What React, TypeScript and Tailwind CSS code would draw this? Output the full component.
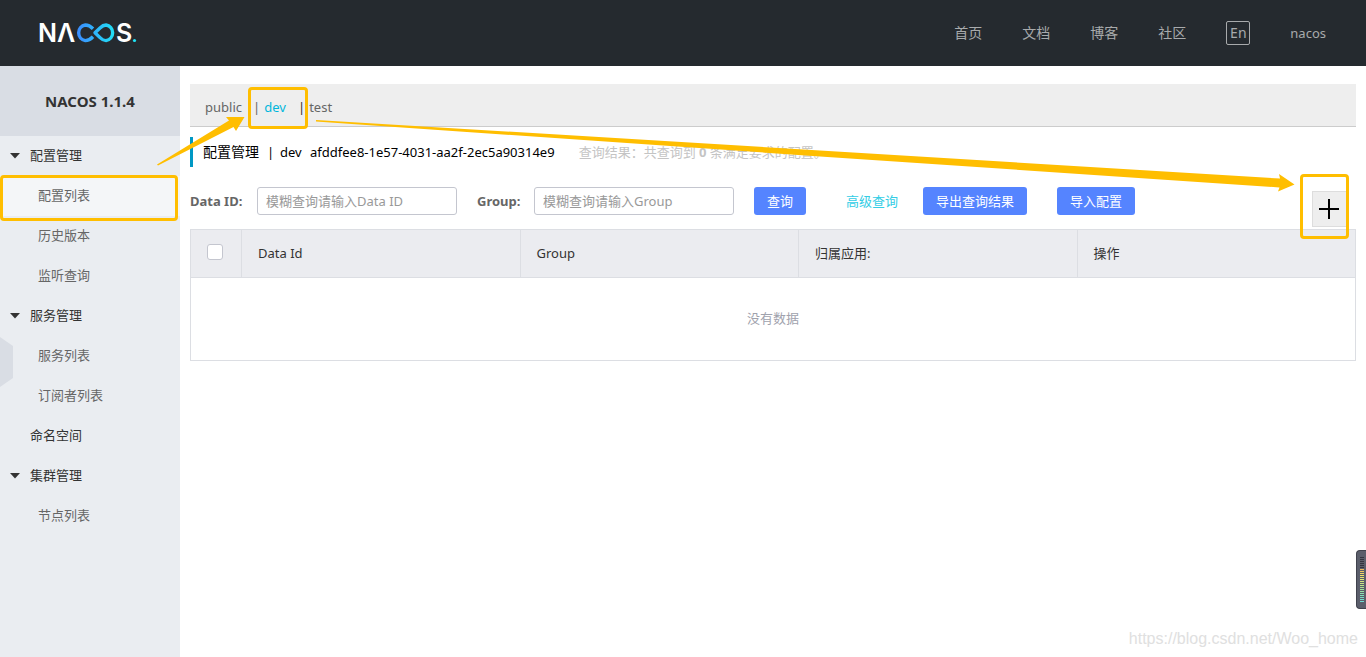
import type { ReactNode } from "react";

const NAV_LINKS = ["首页", "文档", "博客", "社区"];

const MENU = [
  { title: "配置管理", open: true, children: ["配置列表", "历史版本", "监听查询"] },
  { title: "服务管理", open: true, children: ["服务列表", "订阅者列表"] },
  { title: "命名空间", open: false, children: [] },
  { title: "集群管理", open: true, children: ["节点列表"] },
];

const COLUMNS = ["Data Id", "Group", "归属应用:", "操作"];

const METER_COLORS = [
  "#33343f", "#33343f", "#33343f", "#33343f", "#33343f", "#33343f",
  "#f0b95c", "#f0c860", "#efd566", "#ecdf6c", "#e6e472", "#dfe678",
  "#d3e57e", "#c7e484", "#bbe48b", "#aee392", "#a2e29b", "#96e1a5",
  "#8be0b0", "#81dfba", "#79dec4", "#74ddcc", "#70dcd2",
];

const Logo = () => (
  <svg width="108" height="40" viewBox="-4 -7 108 40" role="img" aria-label="NACOS">
    <defs>
      <linearGradient id="loop" x1="37" y1="0" x2="76" y2="0" gradientUnits="userSpaceOnUse">
        <stop offset="0" stopColor="#3c8cff" />
        <stop offset="1" stopColor="#1fe3f5" />
      </linearGradient>
    </defs>
    <g fill="#fff" fontFamily="Inter, sans-serif" fontSize="25" fontWeight="600">
      <text x="-2" y="22">N</text>
      <text x="17" y="22">Λ</text>
      <text x="76" y="22">S</text>
    </g>
    <g fill="none" stroke="url(#loop)" strokeWidth="3.4" strokeLinejoin="round">
      <path d="M53 8.800C50.500 6.200 48.200 5 45.300 5A7.900 7.900 0 0 0 45.300 20.600C48.200 20.600 50.500 19.400 53 16.800" />
      <path d="M55 12.800L60 8C62 6 64 5 66 5A7.900 7.900 0 0 1 66 20.600C64 20.600 62 19.600 60 17.600Z" />
    </g>
    <circle cx="94.5" cy="20.500" r="1.6" fill="#1fe3f5" />
  </svg>
);

const Header = () => (
  <header className="flex h-[66px] items-center justify-between bg-[#252a2f] pr-10 pl-9 text-sm text-[#a8aaac]">
    <a href="#home" className="block">
      <Logo />
    </a>
    <nav className="flex items-center gap-10">
      {NAV_LINKS.map((label) => (
        <a key={label} href="#nav">{label}</a>
      ))}
      <button type="button" className="h-6 w-6 rounded-xs border border-[#a8aaac] text-sm leading-5">
        En
      </button>
      <a href="#user" className="text-[13px]">nacos</a>
    </nav>
  </header>
);

const Highlight = ({ className }: { className: string }) => (
  <span className={`pointer-events-none absolute z-10 rounded-sm border-3 border-[#ffbe00] ${className}`} />
);

const Sidebar = () => (
  <aside className="relative w-[180px] shrink-0 bg-[#eaedf1]">
    <h1 className="h-[70px] bg-[#d9dde4] text-center text-[15px] leading-[70px] font-bold text-[#333]">
      NACOS 1.1.4
    </h1>
    <ul className="leading-[39px]">
      {MENU.map((group) => (
        <li key={group.title}>
          <a href="#group" className="flex h-10 text-[#333]">
            <span className="flex w-[30px] items-center justify-center">
              {group.open && (
                <svg width="10" height="6" viewBox="0 0 10 6" fill="#333">
                  <path d="M0 0h10L5 5.5z" />
                </svg>
              )}
            </span>
            {group.title}
          </a>
          {group.children.map((child) => {
            const active = child === "配置列表";
            return (
              <a
                key={child}
                href="#item"
                className={`relative block h-10 pl-[38px] text-[#666] ${active ? "bg-[#f4f6f8]" : ""}`}
              >
                {child}
                {active && <Highlight className="-top-px right-0.5 -bottom-[5px] left-0" />}
              </a>
            );
          })}
        </li>
      ))}
    </ul>
    <button type="button" aria-label="collapse" className="absolute top-[271px] left-0">
      <svg width="13" height="50" viewBox="0 0 13 50" fill="#d9dde4">
        <path d="M0 0l13 9v32L0 50z" />
      </svg>
    </button>
  </aside>
);

const NamespaceTabs = () => (
  <div className="flex h-[43px] items-center border-b border-[#ccc] bg-[#eee] pt-1 pl-[15px] text-[#666]">
    <a href="#public" className="w-12">public</a>
    <div className="relative flex w-[45px] gap-1">
      <span>|</span>
      <a href="#dev" className="text-[#00b7dc]">dev</a>
      <Highlight className="-top-2.5 -right-2.5 -bottom-3 -left-[5px]" />
    </div>
    <div className="flex gap-1">
      <span className="text-[#333]">|</span>
      <a href="#test">test</a>
    </div>
  </div>
);

const PrimaryButton = ({ children }: { children: ReactNode }) => (
  <button type="button" className="h-7 rounded-[3px] bg-[#5584ff] px-[13px] whitespace-nowrap text-white">
    {children}
  </button>
);

const INPUT_CLASS =
  "h-7 w-[200px] rounded-[3px] border border-[#c4c6cf] bg-white px-2 outline-none placeholder:text-[#999]";

const SearchBar = () => (
  <form className="mt-5 flex items-start leading-7 whitespace-nowrap">
    <label htmlFor="dataId" className="w-[67px] font-bold text-[#666]">Data ID:</label>
    <input id="dataId" className={INPUT_CLASS} placeholder="模糊查询请输入Data ID" />
    <label htmlFor="group" className="ml-5 w-[57px] font-bold text-[#666]">Group:</label>
    <input id="group" className={INPUT_CLASS} placeholder="模糊查询请输入Group" />
    <div className="ml-5 flex">
      <PrimaryButton>查询</PrimaryButton>
      <a href="#advanced" className="mr-[25px] ml-10 text-[#33cde5]">高级查询</a>
      <PrimaryButton>导出查询结果</PrimaryButton>
    </div>
    <div className="ml-[30px]">
      <PrimaryButton>导入配置</PrimaryButton>
    </div>
    <div className="relative mt-1 mr-2 -mb-3 ml-auto">
      <button
        type="button"
        aria-label="新建配置"
        className="flex h-9 w-9 items-center border border-[#ddd] bg-[#eee] pl-1.5"
      >
        <svg width="20" height="20" viewBox="0 0 20 20" stroke="#000" strokeWidth="2">
          <path d="M0 10h20M10 0v20" />
        </svg>
      </button>
      <Highlight className="-top-[17px] -right-px -bottom-3 -left-3" />
    </div>
  </form>
);

const ConfigTable = () => (
  <table className="mt-3.5 w-full table-fixed border-collapse border border-[#dcdee3] text-left">
    <thead>
      <tr className="h-12 bg-[#ebecf0] text-[#333]">
        <th className="w-[51px] border border-[#dcdee3] pr-0.5 pb-1">
          <input
            type="checkbox"
            aria-label="全选"
            className="mx-auto block h-4 w-4 appearance-none rounded-[3px] border border-[#c4c6cf] bg-white"
          />
        </th>
        {COLUMNS.map((col) => (
          <th key={col} className="border-y border-l border-[#dcdee3] px-4 pb-0.5 font-normal">{col}</th>
        ))}
      </tr>
    </thead>
    <tbody>
      <tr className="h-[83px]">
        <td colSpan={5} className="pb-0.5 text-center text-[#a0a2ad]">没有数据</td>
      </tr>
    </tbody>
  </table>
);

// Hand-drawn pointers between the highlighted controls
const Arrows = () => (
  <svg
    className="pointer-events-none absolute top-0 left-0 z-20"
    width="1300"
    height="200"
    viewBox="0 0 1300 200"
    fill="#ffbe00"
  >
    <path d="M157 164.500L229 120.500L226 117L244.500 117L236 131L233.500 127L158 165.500z" />
    <path d="M316 120L820 150.500L1280 178.500L1279 174L1294.500 184.500L1278 191.500L1279.500 187.500L820 156.500L316 121.500z" />
  </svg>
);

const VolumeMeter = () => (
  <div className="absolute right-0 bottom-12 flex h-[59px] w-2.5 flex-col gap-px rounded-l-sm border border-r-0 border-[#40424d] bg-[#5b5e6b] pt-1.5 pl-[3px]">
    {METER_COLORS.map((color, i) => (
      <span key={i} className="h-px w-1 shrink-0" style={{ backgroundColor: color }} />
    ))}
  </div>
);

export default function App() {
  return (
    <div className="relative flex min-h-screen flex-col bg-white font-['Noto_Sans','Noto_Sans_CJK_SC',sans-serif] text-[13px] leading-5">
      <Header />
      <div className="flex grow">
        <Sidebar />
        <main className="min-w-0 grow px-2.5 pt-[18px]">
          <NamespaceTabs />
          <div className="mt-2.5 flex h-[30px] items-center border-l-3 border-[#0098c4] pl-2.5 text-sm whitespace-nowrap text-black">
            <h2>配置管理</h2>
            <span className="w-[21px] pl-2 text-[13px]">|</span>
            <span className="w-[30px] text-[13px]">dev</span>
            <span className="text-[13px]">afddfee8-1e57-4031-aa2f-2ec5a90314e9</span>
            <span className="ml-6 text-[13px] text-[#c4c4c4]">
              查询结果：共查询到 <strong>0</strong> 条满足要求的配置。
            </span>
          </div>
          <SearchBar />
          <ConfigTable />
        </main>
      </div>
      <Arrows />
      <VolumeMeter />
      <span className="absolute right-2 bottom-2 font-['Liberation_Sans',sans-serif] text-base leading-5 text-[#e0e0e0]">
        https://blog.csdn.net/Woo_home
      </span>
    </div>
  );
}
